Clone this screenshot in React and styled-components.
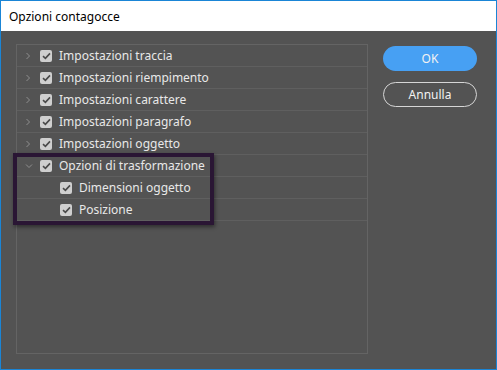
import React from 'react'
import styled, { createGlobalStyle } from 'styled-components'

const Global = createGlobalStyle`
  html, body { margin: 0; padding: 0; background: #535353; }
  * { box-sizing: border-box; }
`

const Window = styled.div`
  width: 497px;
  height: 370px;
  border: 1px solid #1a85d6;
  display: flex;
  flex-direction: column;
  background: #535353;
  font-family: "Noto Sans", "Open Sans", sans-serif;
`

const TitleBar = styled.div`
  height: 30px;
  background: #ffffff;
  color: #000;
  font-size: 12px;
  padding-left: 8px;
  display: flex;
  align-items: center;
`

const Body = styled.div`
  flex: 1;
  display: flex;
  padding: 13px 19px 15px 15px;
  gap: 15px;
`

const Panel = styled.div`
  position: relative;
  width: 352px;
  height: 310px;
  border: 1px solid #646464;
`

const Row = styled.div`
  height: 22px;
  display: flex;
  align-items: center;
  border-bottom: 1px solid #5f5f5f;
  padding-left: ${p => (p.$child ? 43 : 8)}px;
  color: #e8e8e8;
  font-size: 12px;
`

const Chevron = styled.span`
  width: 15px;
  display: flex;
  align-items: center;
`

const Box = styled.span`
  width: 12px;
  height: 12px;
  border-radius: 2px;
  background: #cfcfcf;
  display: flex;
  align-items: center;
  justify-content: center;
  margin-right: 7px;
`

const Highlight = styled.div`
  position: absolute;
  left: -4px;
  top: 108px;
  width: 201px;
  height: 72px;
  border: 4px solid #2a1634;
  box-shadow: 1px 2px 4px rgba(0, 0, 0, 0.45);
  pointer-events: none;
`

const Side = styled.div`
  display: flex;
  flex-direction: column;
  gap: 11px;
  padding-top: 2px;
`

const Button = styled.button`
  width: 94px;
  height: 25px;
  border-radius: 13px;
  font-family: "Noto Sans", "Open Sans", sans-serif;
  font-size: 12px;
  color: #f2f2f2;
  background: ${p => (p.$primary ? '#47a0f3' : 'transparent')};
  border: ${p => (p.$primary ? 'none' : '1px solid #d6d6d6')};
  padding: 0;
`

const Check = () => (
  <Box>
    <svg width="9" height="8" viewBox="0 0 9 8">
      <path d="M1 4.2 L3.4 6.4 L8 1.4" fill="none" stroke="#4a4a4a" strokeWidth="1.6" />
    </svg>
  </Box>
)

const Arrow = ({ open }) => (
  <Chevron>
    {open ? (
      <svg width="8" height="6" viewBox="0 0 8 6">
        <path d="M1 1.5 L4 4.5 L7 1.5" fill="none" stroke="#8f8f8f" strokeWidth="1" />
      </svg>
    ) : (
      <svg width="6" height="8" viewBox="0 0 6 8">
        <path d="M1.5 1 L4.5 4 L1.5 7" fill="none" stroke="#8f8f8f" strokeWidth="1" />
      </svg>
    )}
  </Chevron>
)

const items = [
  'Impostazioni traccia',
  'Impostazioni riempimento',
  'Impostazioni carattere',
  'Impostazioni paragrafo',
  'Impostazioni oggetto',
]

export default function App() {
  return (
    <>
      <Global />
      <Window>
        <TitleBar>Opzioni contagocce</TitleBar>
        <Body>
          <Panel>
            {items.map(t => (
              <Row key={t}>
                <Arrow />
                <Check />
                {t}
              </Row>
            ))}
            <Row>
              <Arrow open />
              <Check />
              Opzioni di trasformazione
            </Row>
            <Row $child>
              <Check />
              Dimensioni oggetto
            </Row>
            <Row $child>
              <Check />
              Posizione
            </Row>
            <Highlight />
          </Panel>
          <Side>
            <Button $primary>OK</Button>
            <Button>Annulla</Button>
          </Side>
        </Body>
      </Window>
    </>
  )
}
